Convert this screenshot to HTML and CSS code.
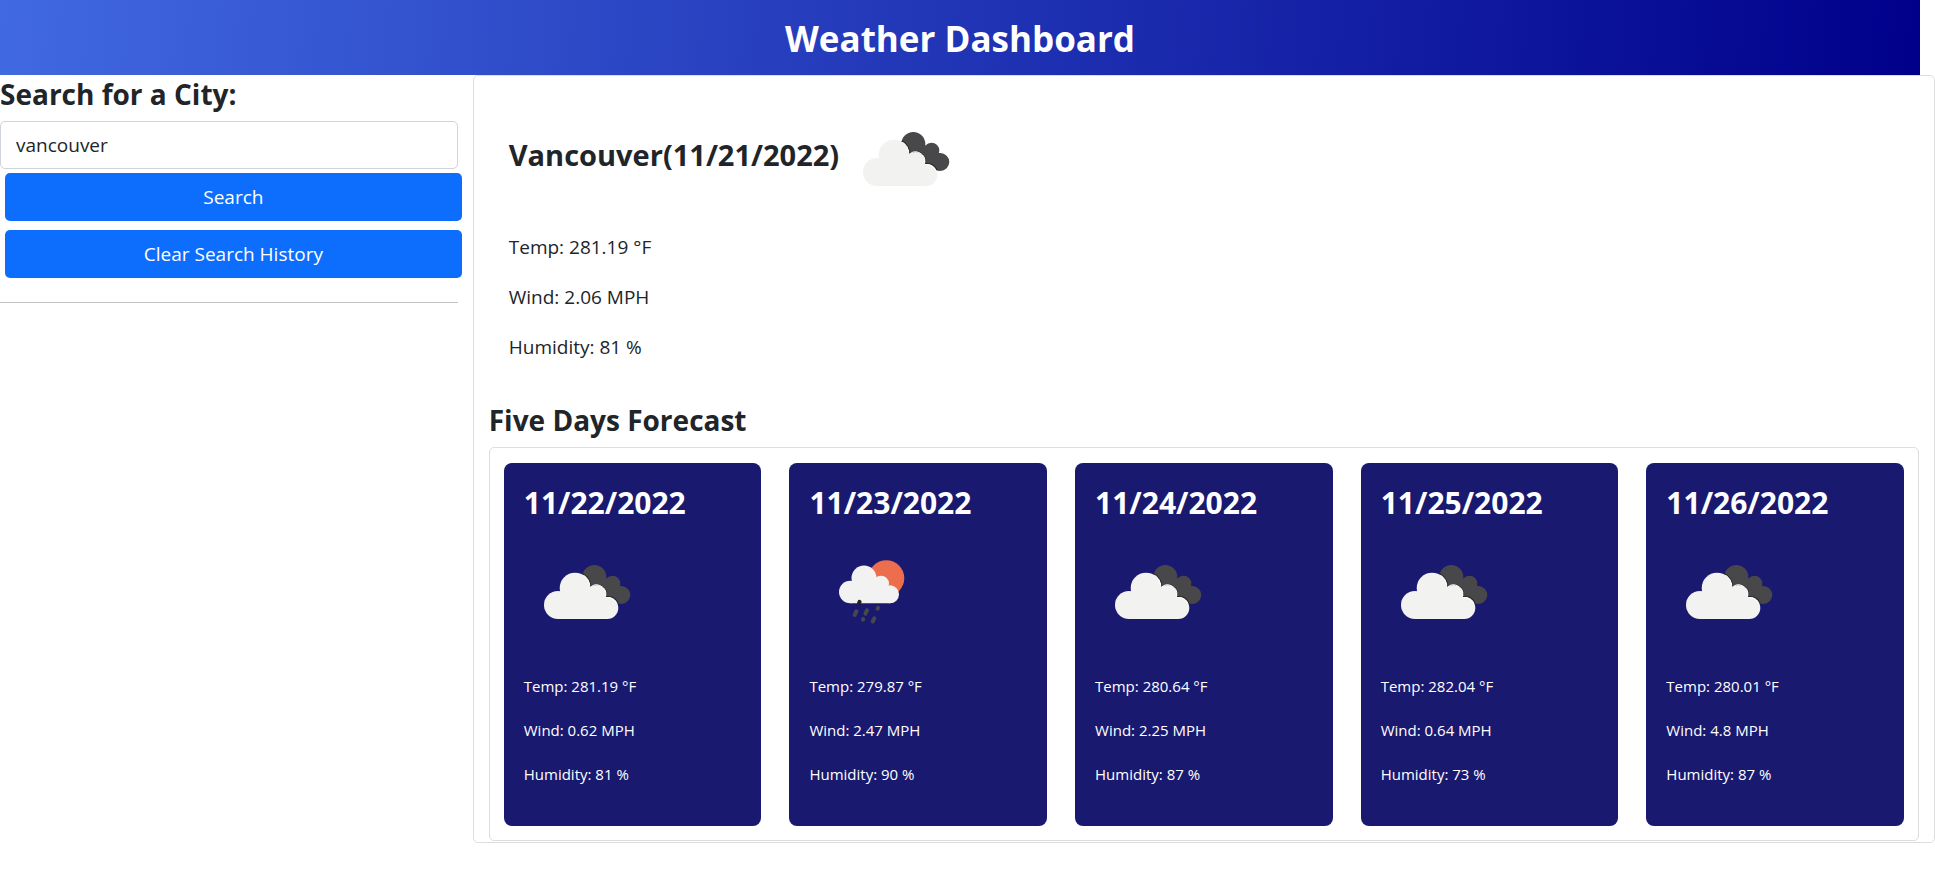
FILE: index.html
```html
<!DOCTYPE html>
<html lang="en">
<head>
<meta charset="utf-8">
<title>Weather Dashboard</title>
<link rel="stylesheet" href="styles.css">
</head>
<body>
<svg class="sprite" width="0" height="0" aria-hidden="true">
  <defs>
    <clipPath id="dark-clip">
      <circle cx="57.3" cy="35" r="12"/><circle cx="75.5" cy="41.5" r="7.8"/><circle cx="84.3" cy="53" r="9"/>
      <path d="M48 42 60 30 70 37 80 46 84 54 80 61 60 58Z"/>
    </clipPath>
    <g id="cloud">
      <circle cx="21" cy="63" r="14"/><circle cx="38" cy="46" r="15.3"/><circle cx="59.5" cy="53" r="9.7"/><circle cx="70.3" cy="66" r="11"/>
      <path d="M21 77V58L32 48H50L64 58 72 66 70.3 77Z"/>
    </g>
  </defs>
  <symbol id="broken-clouds" viewBox="0 0 100 100">
    <g clip-path="url(#dark-clip)">
      <rect width="100" height="100" fill="#48484a"/>
      <use href="#cloud" x="1" y="-1" fill="#2a2a2c"/>
      <use href="#cloud" fill="#fff"/>
    </g>
    <use href="#cloud" fill="#f2f2f0"/>
    <g clip-path="url(#dark-clip)" fill="none" stroke="#fff" stroke-width="1">
      <path d="M52.8 43a15 15 0 0 0-5.5-9.500M53 45.600a9.300 9.300 0 0 1 15.700 8.300M69 55.500a10.700 10.700 0 0 1 11 6.500"/>
    </g>
  </symbol>
  <symbol id="rain" viewBox="0 0 100 100">
    <circle cx="64.3" cy="36.200" r="18" fill="#ec6e4c"/>
    <g fill="#f2f2f2">
      <circle cx="28.300" cy="50" r="11.300"/><circle cx="42" cy="36" r="12.500"/><circle cx="59" cy="41.700" r="8"/><circle cx="68" cy="52.300" r="9"/>
      <path d="M28.300 61.300V44L38 38H52L64 46 70 54 68 61.300Z"/>
    </g>
    <g stroke="#48484a" stroke-width="4" stroke-linecap="round">
      <path d="M37.600 59.800 37 61.400" stroke="#222"/>
      <path d="M34.400 69.300 32.700 73M45 68.300 43.400 71.600M52.300 76.300 50.700 79.500M41.200 77.100 41 77.700M56 65.800 55.600 66.700"/>
    </g>
  </symbol>
</svg>

<header class="banner"><h1>Weather Dashboard</h1></header>

<main class="layout">
  <aside class="search">
    <h2><label for="city">Search for a City:</label></h2>
    <input id="city" class="field" type="text" value="vancouver">
    <div class="actions">
      <button type="button">Search</button>
      <button type="button">Clear Search History</button>
    </div>
    <hr>
  </aside>

  <section class="panel">
    <div class="current">
      <div class="current-head">
        <h2>Vancouver(11/21/2022)</h2>
        <svg class="icon"><use href="#broken-clouds"/></svg>
      </div>
      <div class="readings">
        <p>Temp: 281.19 °F</p>
        <p>Wind: 2.06 MPH</p>
        <p>Humidity: 81 %</p>
      </div>
    </div>
    <h2>Five Days Forecast</h2>
    <div class="forecast">
      <article class="card">
        <h3>11/22/2022</h3>
        <svg class="icon"><use href="#broken-clouds"/></svg>
        <div class="readings"><p>Temp: 281.19 °F</p><p>Wind: 0.62 MPH</p><p>Humidity: 81 %</p></div>
      </article>
      <article class="card">
        <h3>11/23/2022</h3>
        <svg class="icon"><use href="#rain"/></svg>
        <div class="readings"><p>Temp: 279.87 °F</p><p>Wind: 2.47 MPH</p><p>Humidity: 90 %</p></div>
      </article>
      <article class="card">
        <h3>11/24/2022</h3>
        <svg class="icon"><use href="#broken-clouds"/></svg>
        <div class="readings"><p>Temp: 280.64 °F</p><p>Wind: 2.25 MPH</p><p>Humidity: 87 %</p></div>
      </article>
      <article class="card">
        <h3>11/25/2022</h3>
        <svg class="icon"><use href="#broken-clouds"/></svg>
        <div class="readings"><p>Temp: 282.04 °F</p><p>Wind: 0.64 MPH</p><p>Humidity: 73 %</p></div>
      </article>
      <article class="card">
        <h3>11/26/2022</h3>
        <svg class="icon"><use href="#broken-clouds"/></svg>
        <div class="readings"><p>Temp: 280.01 °F</p><p>Wind: 4.8 MPH</p><p>Humidity: 87 %</p></div>
      </article>
    </div>
  </section>
</main>
</body>
</html>
```

FILE: styles.css
```css
* { box-sizing: border-box; }

body {
  margin: 0;
  background: #fff;
  color: #212529;
  font: 19px/30px "Segoe UI", "Open Sans", "Noto Sans", sans-serif;
}

h1, h2, h3, p { margin: 0; }

h2, h3 {
  font-size: 28px;
  line-height: 38px;
  font-weight: 700;
}

.sprite { position: absolute; }

.banner {
  margin-right: 15px;
  padding: 15px 0 12px;
  background: linear-gradient(95deg, royalblue, darkblue);
  color: #fff;
  text-align: center;
}

.banner h1 {
  font-size: 35px;
  line-height: 48px;
  font-weight: 700;
}

.layout {
  display: grid;
  grid-template-columns: calc(25% - 11px) 1fr;
  align-items: start;
}

.search { padding-right: 15px; }

.field {
  display: block;
  width: 100%;
  height: 48px;
  margin-top: 8px;
  padding: 8px 15px;
  border: 1px solid #ced4da;
  border-radius: 5px;
  background: #fff;
  color: #212529;
  font: inherit;
}

.actions {
  display: grid;
  gap: 9px;
  margin: 4px -4px 0 5px;
}

.actions button {
  height: 48px;
  border: 0;
  border-radius: 5px;
  background: #0d6efd;
  color: #fff;
  font: inherit;
}

.search hr {
  margin: 24px 0 0;
  border: 0;
  border-top: 1px solid #c0c2c4;
}

.panel {
  padding: 0 15px 1px;
  border: 1px solid #dcdddf;
  border-radius: 5px;
}

.current { padding: 33px 20px 39px; }

.current-head {
  display: flex;
  gap: 17px;
}

.current-head h2 {
  padding-top: 27px;
  font-size: 29px;
}

.icon {
  display: block;
  width: 100px;
  height: 100px;
}

.readings {
  display: grid;
  gap: 20px;
}

.current .readings { margin-top: 23px; }

.forecast {
  display: grid;
  grid-template-columns: repeat(5, 1fr);
  gap: 28px;
  margin-top: 8px;
  padding: 15px 14px 14px;
  border: 1px solid #dcdddf;
  border-radius: 5px;
}

.card {
  padding: 21px 20px 40px;
  border-radius: 8px;
  background: midnightblue;
  color: #fff;
}

.card h3 { font-size: 30px; }

.card .icon { margin: 20px 0 32px 13px; }

.card .readings {
  font-size: 15px;
  line-height: 24px;
}
```
